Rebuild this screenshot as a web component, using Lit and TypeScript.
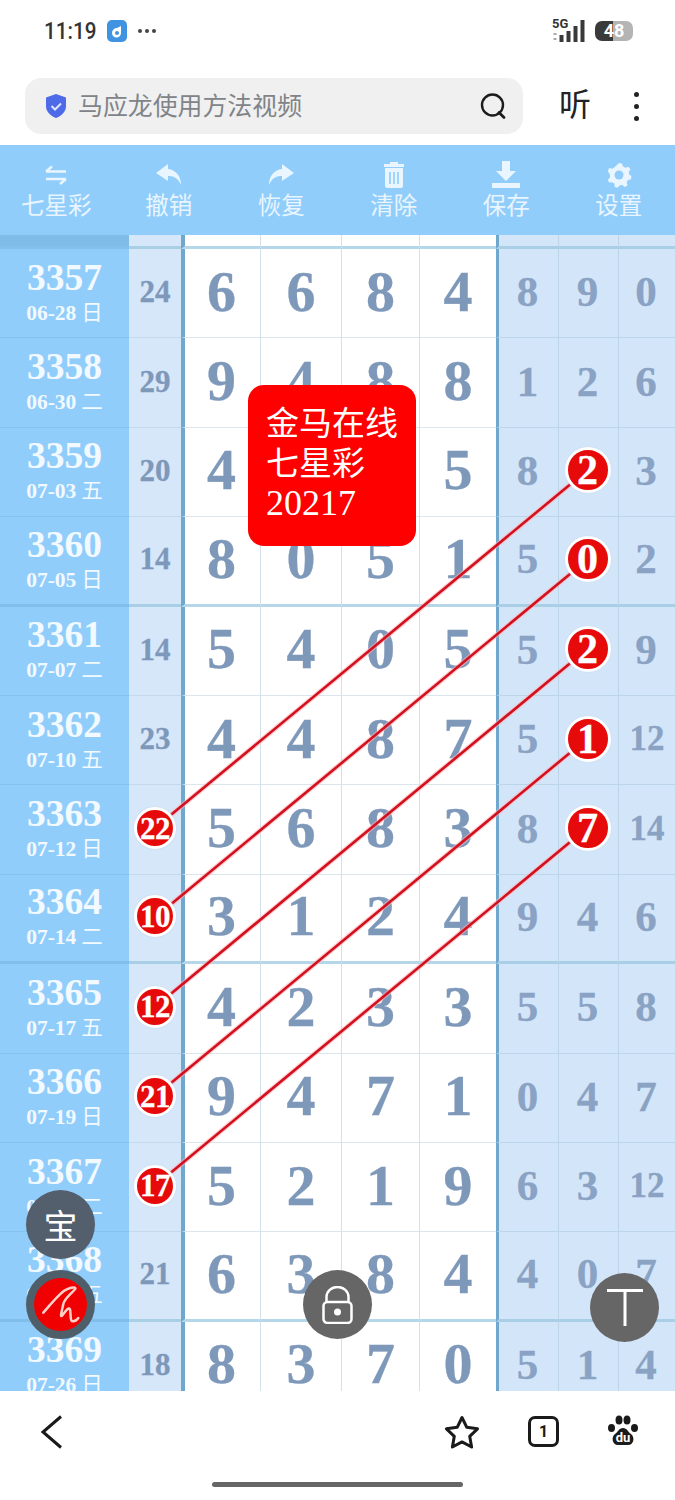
import { LitElement, html, css, svg } from 'lit';
import { customElement } from 'lit/decorators.js';

type Row = [string, string, string, string[], string[]];

const ROWS: Row[] = [
  ['3357', '06-28', '日', ['24'], ['6', '6', '8', '4', '8', '9', '0']],
  ['3358', '06-30', '二', ['29'], ['9', '4', '8', '8', '1', '2', '6']],
  ['3359', '07-03', '五', ['20'], ['4', '3', '7', '5', '8', '2', '3']],
  ['3360', '07-05', '日', ['14'], ['8', '0', '5', '1', '5', '0', '2']],
  ['3361', '07-07', '二', ['14'], ['5', '4', '0', '5', '5', '2', '9']],
  ['3362', '07-10', '五', ['23'], ['4', '4', '8', '7', '5', '1', '12']],
  ['3363', '07-12', '日', ['22'], ['5', '6', '8', '3', '8', '7', '14']],
  ['3364', '07-14', '二', ['10'], ['3', '1', '2', '4', '9', '4', '6']],
  ['3365', '07-17', '五', ['12'], ['4', '2', '3', '3', '5', '5', '8']],
  ['3366', '07-19', '日', ['21'], ['9', '4', '7', '1', '0', '4', '7']],
  ['3367', '07-21', '二', ['17'], ['5', '2', '1', '9', '6', '3', '12']],
  ['3368', '07-24', '五', ['21'], ['6', '3', '8', '4', '4', '0', '7']],
  ['3369', '07-26', '日', ['18'], ['8', '3', '7', '0', '5', '1', '4']],
];

const ROW_H = 89.4;
const HEAD_H = 14;
const ballY = (i: number) => HEAD_H + ROW_H * i + ROW_H / 2 - 2;

// each link joins a ball in the sum column to a ball in the middle side column
const LINKS: [number, number][] = [
  [6, 2],
  [7, 3],
  [8, 4],
  [9, 5],
  [10, 6],
];
const LEFT_BALLS = new Set(LINKS.map((l) => l[0]));
const RIGHT_BALLS = new Set(LINKS.map((l) => l[1]));

const TOOLS = [
  {
    label: '七星彩',
    icon: svg`<path d="M4 10.500h20M4 10.500l6-5M24 18H4M24 18l-6 5" fill="none" stroke="currentColor" stroke-width="2.500"/>`,
  },
  {
    label: '撤销',
    icon: svg`<path d="M13 3 1 12l12 8v-5c6 0 10 2 13 9 0-9-5-15-13-16z" fill="currentColor"/>`,
  },
  {
    label: '恢复',
    icon: svg`<path d="M15 3l12 9-12 8v-5C9 15 5 17 2 24c0-9 5-15 13-16z" fill="currentColor"/>`,
  },
  {
    label: '清除',
    icon: svg`<path d="M10 1h8v2h6v3H4V3h6zM5 7h18v18a2 2 0 0 1-2 2H7a2 2 0 0 1-2-2z" fill="currentColor"/><path d="M10 11v12M14 11v12M18 11v12" stroke="#90cdfb" stroke-width="1.600"/>`,
  },
  {
    label: '保存',
    icon: svg`<path d="M10 0h8v10h6L14 20 4 10h6zM0 22h28v5H0z" fill="currentColor"/>`,
  },
  {
    label: '设置',
    icon: svg`<path d="M14 2l3 .5 1 3 2.500 1.200 3-1 2 2.600-1.800 2.600.4 2.600 2.400 1.600-.5 3.200-3 .8-1.300 2.400.8 3-2.800 1.600-2.400-2-2.600.2-1.800 2.400-3.100-.8-.4-3.100-2.200-1.600-3 .4-1.400-2.900 2.200-2.200v-2.600L2.800 9.800l1.500-2.800 3 .7 2.200-1.500z" fill="currentColor"/><circle cx="14" cy="14" r="4.500" fill="#90cdfb"/>`,
  },
];

@customElement('app-root')
export class AppRoot extends LitElement {
  static styles = css`
    :host {
      display: block;
      position: relative;
      width: 675px;
      height: 1500px;
      overflow: hidden;
      background: #fff;
      font-family: 'Liberation Serif', 'Noto Sans CJK SC', serif;
    }
    .sans {
      font-family: Roboto, 'Noto Sans CJK SC', sans-serif;
    }

    .status {
      height: 62px;
      box-sizing: border-box;
      padding: 0 42px 0 44px;
      display: flex;
      align-items: center;
      color: #333;
    }
    .time {
      font-size: 24px;
      font-weight: 500;
      width: 63px;
      transform: scaleX(0.86);
      transform-origin: left center;
    }
    .appdot {
      width: 20px;
      height: 22px;
      display: block;
      margin-right: 11px;
    }
    .more {
      flex: 1;
      display: flex;
      gap: 3px;
    }
    .more i {
      width: 4px;
      height: 4px;
      background: #444;
      border-radius: 50%;
    }
    .signal {
      display: block;
      margin-right: 7px;
    }
    .battery {
      width: 38px;
      height: 20px;
      border-radius: 7px;
      background: linear-gradient(90deg, #3a3a3a 0 48%, #b4b4b4 48% 100%);
      color: #fff;
      font: 700 18px/20px Roboto, sans-serif;
      text-align: center;
    }

    .nav {
      height: 83px;
      box-sizing: border-box;
      padding: 16px 30px 11px 25px;
      display: flex;
      align-items: stretch;
    }
    .search {
      width: 498px;
      background: #f0f0f0;
      border-radius: 16px;
      display: flex;
      align-items: center;
      box-sizing: border-box;
      padding: 0 16px 0 19px;
      color: #808489;
      font-size: 24.900px;
    }
    .search span {
      flex: 1;
      margin-left: 10px;
      padding-bottom: 4px;
    }
    .listen {
      width: 104px;
      text-align: center;
      font-size: 32px;
      line-height: 55px;
      color: #222;
    }
    .dots {
      display: flex;
      flex-direction: column;
      justify-content: center;
      gap: 7px;
      width: 6px;
      margin-left: 7px;
    }
    .dots i {
      width: 5px;
      height: 5px;
      border-radius: 50%;
      background: #222;
    }

    .tools {
      height: 90px;
      background: #90cdfb;
      display: grid;
      grid-template-columns: repeat(6, 1fr);
      color: #e9f5ff;
    }
    .tool {
      display: flex;
      flex-direction: column;
      align-items: center;
      padding-top: 16px;
      font-size: 23.500px;
      line-height: 30px;
    }
    .tool svg {
      display: block;
      margin-bottom: 2px;
    }

    .sheet {
      position: relative;
      height: 1156px;
      overflow: hidden;
    }
    .row {
      display: grid;
      grid-template-columns: 129px 52px 79px 81px 78px 77px 62px 60px 57px;
      height: 89.400px;
    }
    .row.head {
      height: 14px;
    }
    .cell {
      box-sizing: border-box;
      display: flex;
      align-items: center;
      justify-content: center;
      padding-bottom: 3px;
      border-bottom: 1px solid #dbe5ec;
      border-left: 1px solid #d3e1ea;
      color: #7e98ba;
      font-weight: 700;
      font-size: 58px;
      line-height: 1;
      background: #fff;
      -webkit-text-stroke: 0.3px currentColor;
    }
    .row.thick .cell {
      border-bottom: 3px solid #b6d7ea;
    }
    .cell.first {
      border: none;
      border-bottom: 1px solid #84c2f0;
      padding: 2px 0 0;
      background: #90cdfb;
      flex-direction: column;
      color: #f2f9ff;
      -webkit-text-stroke: 0;
    }
    .row.thick .cell.first {
      border-bottom: 3px solid #80bfeb;
    }
    .cell.first.stub,
    .row.thick .cell.first.stub {
      background: #7fbde8;
      border-bottom: 3px solid #83c1ec;
    }
    .num {
      font-size: 37.500px;
      line-height: 34px;
      margin-top: -3px;
    }
    .date {
      font-size: 21.500px;
      line-height: 24px;
      margin-top: 6px;
      display: flex;
      gap: 5px;
    }
    .date .sans {
      font-weight: 400;
    }
    .cell.sum {
      border-left: none;
      border-bottom-color: #c5d9ec;
      background: #d6e7fa;
      font-size: 31px;
    }
    .row.thick .cell.sum {
      border-bottom-color: #a9cfe6;
    }
    .cell.sep {
      border-left: 4px solid #6fa8cc;
      padding-right: 2px;
    }
    .cell.side {
      border-left-color: #bcd5e8;
      border-bottom-color: #bcd5e8;
      background: #d3e6f9;
      font-size: 43px;
      color: #8aa2c3;
      padding-right: 2px;
    }
    .row.thick .cell.side {
      border-bottom-color: #a9cfe6;
    }
    .cell.side.sep {
      border-left: 3px solid #6fa8cc;
    }
    .cell.side.small {
      font-size: 35px;
      padding-right: 0;
    }

    .ball {
      position: relative;
      z-index: 2;
      flex: none;
      border-radius: 50%;
      background: #e60a0a;
      color: #fff;
      display: flex;
      align-items: center;
      justify-content: center;
      box-sizing: border-box;
    }
    .ball.big {
      width: 46px;
      height: 46px;
      border: 3px solid #fff;
      font-size: 42px;
      box-shadow: 0 0 2px #c9d6e6;
    }
    .ball.small {
      width: 42px;
      height: 42px;
      border: 3px solid #fff;
      font-size: 31px;
      letter-spacing: -0.5px;
      box-shadow: 0 0 2px #c9d6e6;
    }
    .links {
      position: absolute;
      left: 0;
      top: 0;
      z-index: 1;
      pointer-events: none;
    }

    .popup {
      position: absolute;
      left: 248px;
      top: 385px;
      z-index: 3;
      width: 168px;
      height: 161px;
      box-sizing: border-box;
      padding: 16px 0 0 18px;
      background: #ff0000;
      border-radius: 16px;
      color: #fff;
      font-size: 33px;
      line-height: 40px;
      font-family: 'Noto Sans CJK SC', sans-serif;
    }
    .popup .year {
      font-family: 'Liberation Serif', serif;
      font-size: 36px;
    }

    .fab {
      position: absolute;
      z-index: 4;
      width: 69px;
      height: 69px;
      border-radius: 50%;
      background: #666;
      color: #fff;
      display: flex;
      align-items: center;
      justify-content: center;
    }
    .fab.bao {
      left: 26px;
      top: 1190px;
      background: #535f6c;
      font-size: 34px;
    }
    .fab.sign {
      left: 26px;
      top: 1270px;
      background: #f00000;
      border: 8px solid #4f5f6a;
      box-sizing: border-box;
    }
    .fab.lock {
      left: 303px;
      top: 1270px;
    }
    .fab.text {
      left: 590px;
      top: 1273px;
    }

    .bottom {
      height: 109px;
      box-sizing: border-box;
      padding: 24px 36px 0 39px;
      display: flex;
      align-items: flex-start;
      position: relative;
      background: #fff;
    }
    .bottom .back {
      margin-right: auto;
    }
    .tab {
      width: 31px;
      height: 31px;
      box-sizing: border-box;
      border: 3px solid #1a1a1a;
      border-radius: 7px;
      margin: 1px 48px 0 48px;
      font: 700 16px/25px Roboto, sans-serif;
      text-align: center;
      color: #1a1a1a;
    }
    .bar {
      position: absolute;
      left: 212px;
      top: 91px;
      width: 251px;
      height: 5px;
      border-radius: 3px;
      background: #666;
    }
  `;

  private renderCell(value: string, cls: string, ball: boolean, ballCls: string) {
    return html`<div class="cell ${cls}">
      ${ball ? html`<div class="ball ${ballCls}">${value}</div>` : value}
    </div>`;
  }

  private renderRow(r: Row, i: number) {
    const [num, date, day, sum, d] = r;
    const thick = i % 4 === 3;
    return html`<div class="row ${thick ? 'thick' : ''}">
      <div class="cell first">
        <div class="num">${num}</div>
        <div class="date"><span>${date}</span><span class="sans">${day}</span></div>
      </div>
      ${this.renderCell(sum[0], 'sum', LEFT_BALLS.has(i), 'small')}
      ${d.slice(0, 4).map((v, j) => html`<div class="cell ${j === 0 ? 'sep' : ''}">${v}</div>`)}
      ${d.slice(4).map((v, j) =>
        this.renderCell(
          v,
          `side ${j === 0 ? 'sep' : ''} ${v.length > 1 ? 'small' : ''}`,
          j === 1 && RIGHT_BALLS.has(i),
          'big'
        )
      )}
    </div>`;
  }

  render() {
    return html`
      <div class="status">
        <div class="time sans">11:19</div>
        <svg class="appdot" viewBox="0 0 20 22">
          <rect width="20" height="22" rx="5" fill="#3f93e0" />
          <path d="M5 13a5 5 0 0 1 5-5l4-2v7a4 4 0 0 1-9 0z" fill="#fff" />
          <circle cx="10" cy="13" r="2" fill="#3f93e0" />
        </svg>
        <div class="more"><i></i><i></i><i></i></div>
        <svg class="signal" width="36" height="26" viewBox="0 0 36 26">
          <text x="0" y="10" font-family="Roboto" font-weight="700" font-size="13" fill="#333">5G</text>
          <path d="M3 15v2M3 20v2" stroke="#aaa" stroke-width="3" />
          <path d="M9.500 17v7M16.500 13v11M23.500 8v16M30.500 2v22" stroke="#3a3a3a" stroke-width="4" />
        </svg>
        <div class="battery">48</div>
      </div>

      <div class="nav">
        <div class="search sans">
          <svg width="24" height="26" viewBox="0 0 24 26">
            <path d="M12 1l10 3.500v9C22 19 17 23 12 25 7 23 2 19 2 13.500v-9z" fill="#4d6be8" />
            <path d="M7.500 13l3.500 3.500 6-6" fill="none" stroke="#dfe6ff" stroke-width="2" />
          </svg>
          <span>马应龙使用方法视频</span>
          <svg width="28" height="28" viewBox="0 0 28 28">
            <circle cx="13.500" cy="13" r="10.500" fill="none" stroke="#1c1c1c" stroke-width="2.400" />
            <path d="M20 20.500l5 5" stroke="#1c1c1c" stroke-width="2.800" stroke-linecap="round" />
          </svg>
        </div>
        <div class="listen sans">听</div>
        <div class="dots"><i></i><i></i><i></i></div>
      </div>

      <div class="tools sans">
        ${TOOLS.map(
          (t) => html`<div class="tool">
            <svg width="28" height="28" viewBox="0 0 28 28">${t.icon}</svg>
            ${t.label}
          </div>`
        )}
      </div>

      <div class="sheet">
        <div class="row head thick">
          <div class="cell first stub"></div>
          <div class="cell sum"></div>
          <div class="cell sep"></div>
          <div class="cell"></div>
          <div class="cell"></div>
          <div class="cell"></div>
          <div class="cell side sep"></div>
          <div class="cell side"></div>
          <div class="cell side"></div>
        </div>
        ${ROWS.map((r, i) => this.renderRow(r, i))}
        <svg class="links" width="675" height="1156">
          ${LINKS.map(
            ([a, b]) => svg`
              <line x1="155" y1=${ballY(a)} x2="587" y2=${ballY(b)} stroke="#ffb3b8" stroke-opacity="0.6" stroke-width="5" />
              <line x1="155" y1=${ballY(a)} x2="587" y2=${ballY(b)} stroke="#d3101e" stroke-width="2.600" />
            `
          )}
        </svg>
      </div>

      <div class="popup">金马在线<br />七星彩<br /><span class="year">20217</span></div>

      <div class="fab bao sans">宝</div>
      <div class="fab sign">
        <svg width="53" height="53" viewBox="8 8 53 53">
          <path
            d="M17.300 42.700C26 33 34 22 40.700 19.300C46 16.500 51 17 49 19.300C44 25 38 29 37.300 34.300C36 40 34 47 35.700 46C38 44 42 36 44 39.300C45 43 44 49 45.700 51C48 52 50 51 52.300 48"
            fill="none"
            stroke="#ffd0c8"
            stroke-width="2.500"
            stroke-linecap="round"
          />
        </svg>
      </div>
      <div class="fab lock">
        <svg width="31" height="38" viewBox="0 0 31 38">
          <path d="M4.500 16V11a11 10 0 0 1 22 0v5" fill="none" stroke="#fff" stroke-width="2.500" />
          <rect x="1.500" y="16" width="28" height="21" rx="4" fill="none" stroke="#fff" stroke-width="2.500" />
          <circle cx="15.500" cy="26" r="3.500" fill="#fff" />
        </svg>
      </div>
      <div class="fab text">
        <svg width="36" height="38" viewBox="0 0 36 38">
          <path d="M0 1.500h36M18 1.500V37" fill="none" stroke="#fff" stroke-width="3" />
        </svg>
      </div>

      <div class="bottom">
        <svg class="back" width="24" height="34" viewBox="0 0 24 34">
          <path d="M22 1.500 4 17l18 15.500" fill="none" stroke="#1a1a1a" stroke-width="3" />
        </svg>
        <svg width="36" height="34" viewBox="0 0 36 34">
          <path
            d="M18 2.500l4.800 9.800 10.700 1.500-7.800 7.500 1.900 10.700L18 26.900 8.400 32l1.900-10.700-7.800-7.500 10.700-1.500z"
            fill="none"
            stroke="#1a1a1a"
            stroke-width="3"
            stroke-linejoin="round"
          />
        </svg>
        <div class="tab">1</div>
        <svg width="32" height="32" viewBox="0 0 32 32">
          <ellipse cx="4.500" cy="13" rx="3.500" ry="4" fill="#1a1a1a" />
          <ellipse cx="12" cy="5" rx="3.500" ry="4.500" fill="#1a1a1a" />
          <ellipse cx="20" cy="5" rx="3.500" ry="4.500" fill="#1a1a1a" />
          <ellipse cx="27.500" cy="13" rx="3.500" ry="4" fill="#1a1a1a" />
          <path d="M16 13c4 0 5 4 8 6 4 3 3 11-3 11H11c-6 0-7-8-3-11 3-2 4-6 8-6z" fill="#1a1a1a" />
          <text x="16" y="27" text-anchor="middle" font-family="Roboto" font-weight="700" font-size="13" fill="#fff">du</text>
        </svg>
        <div class="bar"></div>
      </div>
    `;
  }
}
